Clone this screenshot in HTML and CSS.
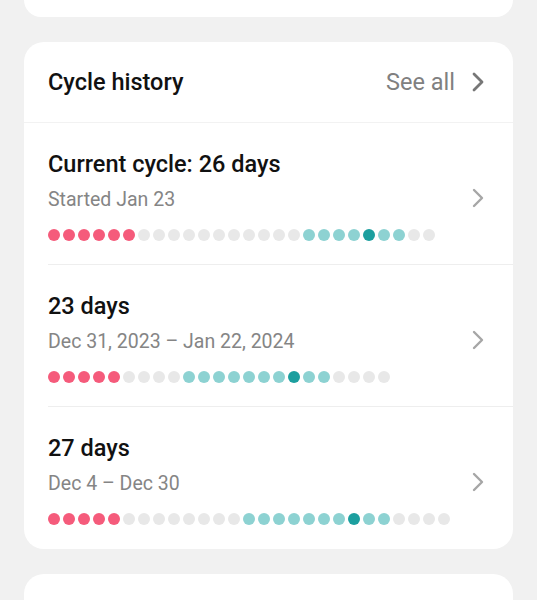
FILE: index.html
```html
<!DOCTYPE html>
<html lang="en">
<head>
    <meta charset="UTF-8">
    <title>Cycle history</title>
    <link rel="stylesheet" href="styles.css">
</head>
<body>
<div class="page">
    <div class="card card-end"></div>

    <div class="card">
        <div class="head">
            <span class="head-title">Cycle history</span>
            <span class="see-all">See all
                <svg class="chev chev-dark" viewBox="0 0 12 20"><polyline points="2,2 10,10 2,18"/></svg>
            </span>
        </div>

        <div class="row">
            <div class="row-main">
                <div class="title">Current cycle: 26 days</div>
                <div class="sub">Started Jan 23</div>
                <div class="dots">
                    <i class="p"></i><i class="p"></i><i class="p"></i><i class="p"></i><i class="p"></i><i class="p"></i>
                    <i></i><i></i><i></i><i></i><i></i><i></i><i></i><i></i><i></i><i></i><i></i>
                    <i class="t"></i><i class="t"></i><i class="t"></i><i class="t"></i><i class="d"></i><i class="t"></i><i class="t"></i>
                    <i></i><i></i>
                </div>
            </div>
            <svg class="chev" viewBox="0 0 12 20"><polyline points="2,2 10,10 2,18"/></svg>
        </div>

        <div class="row">
            <div class="row-main">
                <div class="title">23 days</div>
                <div class="sub">Dec 31, 2023 – Jan 22, 2024</div>
                <div class="dots">
                    <i class="p"></i><i class="p"></i><i class="p"></i><i class="p"></i><i class="p"></i>
                    <i></i><i></i><i></i><i></i>
                    <i class="t"></i><i class="t"></i><i class="t"></i><i class="t"></i><i class="t"></i><i class="t"></i><i class="t"></i><i class="d"></i><i class="t"></i><i class="t"></i>
                    <i></i><i></i><i></i><i></i>
                </div>
            </div>
            <svg class="chev" viewBox="0 0 12 20"><polyline points="2,2 10,10 2,18"/></svg>
        </div>

        <div class="row">
            <div class="row-main">
                <div class="title">27 days</div>
                <div class="sub">Dec 4 – Dec 30</div>
                <div class="dots">
                    <i class="p"></i><i class="p"></i><i class="p"></i><i class="p"></i><i class="p"></i>
                    <i></i><i></i><i></i><i></i><i></i><i></i><i></i><i></i>
                    <i class="t"></i><i class="t"></i><i class="t"></i><i class="t"></i><i class="t"></i><i class="t"></i><i class="t"></i><i class="d"></i><i class="t"></i><i class="t"></i>
                    <i></i><i></i><i></i><i></i>
                </div>
            </div>
            <svg class="chev" viewBox="0 0 12 20"><polyline points="2,2 10,10 2,18"/></svg>
        </div>
    </div>

    <div class="card card-next"></div>
</div>
</body>
</html>
```

FILE: styles.css
```css
*{
    margin: 0;
    padding: 0;
    box-sizing: border-box;
}
body{
    background: #f1f1f1;
    font-family: Roboto, "Liberation Sans", sans-serif;
    color: #111;
}
.page{
    padding: 0 24px;
    display: flex;
    flex-direction: column;
    gap: 25px;
    height: 600px;
    overflow: hidden;
}
.card{
    background: #fff;
    border-radius: 20px;
    flex-shrink: 0;
}
.card-end{
    height: 17px;
    border-radius: 0 0 20px 20px;
}
.card-next{
    height: 60px;
}
.head{
    height: 81px;
    padding: 0 29px 0 24px;
    display: flex;
    align-items: center;
    justify-content: space-between;
    border-bottom: 1px solid #f2f2f2;
}
.head-title{
    font-size: 23.5px;
    font-weight: 500;
}
.see-all{
    display: flex;
    align-items: center;
    gap: 17px;
    font-size: 23.5px;
    color: #808080;
}
.chev{
    width: 12px;
    height: 20px;
    fill: none;
    stroke: #a6a6a6;
    stroke-width: 2.4;
    stroke-linecap: round;
    stroke-linejoin: round;
    flex-shrink: 0;
    margin-top: 38px;
}
.chev-dark{
    stroke: #777;
    stroke-width: 2.8;
    margin-top: 0;
}
.row{
    height: 142px;
    margin-left: 24px;
    padding: 27px 29px 0 0;
    display: flex;
    align-items: flex-start;
    justify-content: space-between;
    border-bottom: 1px solid #eeeeee;
}
.row:last-child{
    border-bottom: none;
}
.title{
    font-size: 23.5px;
    font-weight: 500;
    line-height: 28px;
}
.sub{
    font-size: 19.5px;
    color: #858585;
    line-height: 24px;
    margin-top: 10px;
}
.dots{
    display: flex;
    gap: 3px;
    margin-top: 17px;
}
.dots i{
    display: block;
    width: 12px;
    height: 12px;
    border-radius: 50%;
    background: #e8e8e8;
}
.dots .p{
    background: #f55b7b;
}
.dots .t{
    background: #8dd2d2;
}
.dots .d{
    background: #1c9f9f;
}
```
